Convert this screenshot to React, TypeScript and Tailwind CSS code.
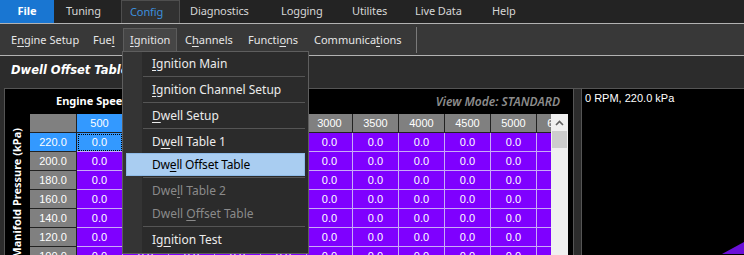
import React from 'react'

const cols = ['500', '1000', '1500', '2000', '2500', '3000', '3500', '4000', '4500', '5000', '6000']
const rows = ['220.0', '200.0', '180.0', '160.0', '140.0', '120.0', '100.0', '80.0']

// text with one access-key letter underlined
function K({ t, k }: { t: string; k: number }) {
  return (
    <span>
      {t.slice(0, k)}
      <span className="underline underline-offset-2 decoration-1">{t[k]}</span>
      {t.slice(k + 1)}
    </span>
  )
}

type Item = { t: string; k: number; disabled?: boolean; active?: boolean } | 'sep'

const menuItems: Item[] = [
  { t: 'Ignition Main', k: 0 },
  'sep',
  { t: 'Ignition Channel Setup', k: 0 },
  'sep',
  { t: 'Dwell Setup', k: 0 },
  'sep',
  { t: 'Dwell Table 1', k: 1 },
  { t: 'Dwell Offset Table', k: 2, active: true },
  'sep',
  { t: 'Dwell Table 2', k: 3, disabled: true },
  { t: 'Dwell Offset Table', k: 6, disabled: true },
  'sep',
  { t: 'Ignition Test', k: 2 },
]

function IgnitionMenu() {
  return (
    <div className="absolute left-[122px] top-[51px] w-[187px] border border-[#5e5e5e] bg-[linear-gradient(to_right,#343434_19px,#2b2b2b_19px)] pb-[2px] text-[12px] text-[#ececec]">
      {menuItems.map((it, i) => {
        if (it === 'sep') {
          return (
            <div key={i} className="h-[3px] flex items-center pl-[20px] pr-[3px]">
              <div className="h-px w-full bg-[#555]" />
            </div>
          )
        }
        if (it.active) {
          return (
            <div key={i} className="mx-[3px] h-[23px] flex items-center pl-[25px] tracking-[-0.2px] bg-[#a9cdf1] border border-[#8fbbe8] text-black">
              <K t={it.t} k={it.k} />
            </div>
          )
        }
        return (
          <div key={i} className={`h-[23px] flex items-center pl-[29px] ${it.disabled ? 'text-[#8a8a8a]' : ''}`}>
            <K t={it.t} k={it.k} />
          </div>
        )
      })}
    </div>
  )
}

function Grid() {
  return (
    <div className="w-[521px] overflow-hidden shrink-0 font-['Liberation_Sans',sans-serif] text-[11px]">
      <div className="flex">
        <div className="w-[47px] h-[19px] shrink-0 bg-[#808080] border-r border-b border-[#222]" />
        {cols.map((c, i) => (
          <div
            key={c}
            className={`w-[46px] h-[19px] shrink-0 flex items-center justify-center border-r border-b border-[#222] text-white ${i === 0 ? 'bg-[#3399ff]' : 'bg-[#808080]'}`}
          >
            {c}
          </div>
        ))}
      </div>
      {rows.map((r, ri) => (
        <div key={r} className="flex">
          <div
            className={`w-[47px] h-[19px] shrink-0 flex items-center justify-center border-r border-b border-[#222] text-white ${ri === 0 ? 'bg-[#3399ff]' : 'bg-[#808080]'}`}
          >
            {r}
          </div>
          {cols.map((c, ci) =>
            ri === 0 && ci === 0 ? (
              <div key={c} className="w-[46px] h-[19px] shrink-0 flex items-center justify-center border-r border-b border-[#c9a9f7] bg-[#3399ff] text-white outline-1 outline-dotted outline-black -outline-offset-2">
                0.0
              </div>
            ) : (
              <div key={c} className="w-[46px] h-[19px] shrink-0 flex items-center justify-center border-r border-b border-[#c9a9f7] bg-[#7f00ff] text-white">
                0.0
              </div>
            )
          )}
        </div>
      ))}
    </div>
  )
}

export default function App() {
  const top = [
    { t: 'Tuning', w: 'w-[67px] pl-[12px]' },
    { t: 'Config', w: 'w-[59px] pl-[8px]', on: true },
    { t: 'Diagnostics', w: 'w-[91px] pl-[10px]' },
    { t: 'Logging', w: 'w-[71px] pl-[10px]' },
    { t: 'Utilites', w: 'w-[63px] pl-[10px]' },
    { t: 'Live Data', w: 'w-[77px] pl-[10px]' },
    { t: 'Help', w: 'w-[60px] pl-[10px]' },
  ]

  return (
    <div className="relative w-[744px] h-[255px] overflow-hidden bg-[#2c2c2c] font-['Noto_Sans',sans-serif] text-[12px]">
      {/* main menu */}
      <div className="h-[23px] flex bg-[#232323] text-[#d6d6d6] text-[11px] tracking-[-0.1px]">
        <div className="w-[54px] flex items-center justify-center bg-[#1976d2] text-white font-bold">File</div>
        {top.map((m) =>
          m.on ? (
            <div key={m.t} className={`${m.w} flex items-center border-x border-t border-[#4e4e4e] bg-[#313131] text-[#3d8fdd]`}>
              {m.t}
            </div>
          ) : (
            <div key={m.t} className={`${m.w} flex items-center`}>{m.t}</div>
          )
        )}
      </div>
      <div className="h-px bg-[#b2b2b2]" />

      {/* toolbar */}
      <div className="h-[31px] flex items-start pt-[4px] pl-[4px] bg-[#383838] text-[#e6e6e6] text-[11px]">
        <div className="w-[82px] h-[24px] flex items-center pl-[7px]"><K t="Engine Setup" k={1} /></div>
        <div className="w-[37px] h-[24px] flex items-center pl-[7px]"><K t="Fuel" k={3} /></div>
        <div className="w-[54px] h-[24px] flex items-center pl-[6px] bg-[#464646] border border-[#5c5c5c]"><K t="Ignition" k={0} /></div>
        <div className="w-[64px] h-[24px] flex items-center pl-[8px]"><K t="Channels" k={1} /></div>
        <div className="w-[66px] h-[24px] flex items-center pl-[7px]"><K t="Functions" k={6} /></div>
        <div className="w-[105px] h-[24px] flex items-center pl-[7px]"><K t="Communications" k={9} /></div>
        <div className="ml-[4px] -mt-[1px] w-px h-[26px] bg-[#7a7a7a]" />
      </div>
      <div className="h-px bg-[#b2b2b2]" />

      {/* content */}
      <div className="h-[32px] pt-[5px] pl-[11px]">
        <div className="leading-[18px] text-white font-bold italic text-[11.5px] font-['DejaVu_Sans',sans-serif]">Dwell Offset Table</div>
      </div>

      <div className="flex h-[200px]">
        {/* table panel */}
        <div className="ml-[4px] w-[570px] shrink-0 border border-[#555] bg-black flex flex-col">
          <div className="h-[25px] flex items-center justify-between pl-[51px] pr-[13px]">
            <span className="text-white font-bold text-[11px]">Engine Speed</span>
            <span className="text-[#8c8c8c] italic font-semibold text-[12px]">View Mode: STANDARD</span>
          </div>
          <div className="flex flex-1 overflow-hidden">
            <div className="w-[25px] shrink-0 flex items-start justify-center pt-[14px]">
              <span className="[writing-mode:vertical-rl] rotate-180 text-white font-bold text-[11px] whitespace-nowrap">
                Manifold Pressure (kPa)
              </span>
            </div>
            <Grid />
            <div className="w-[17px] shrink-0 bg-[#f0f0f0] flex flex-col">
              <div className="h-[17px] flex items-center justify-center">
                <svg width="9" height="6" viewBox="0 0 9 6">
                  <path d="M1 5 L4.5 1.5 L8 5" fill="none" stroke="#606060" strokeWidth="1.6" />
                </svg>
              </div>
              <div className="mx-[1px] h-[17px] bg-[#cdcdcd]" />
            </div>
          </div>
        </div>

        {/* splitter */}
        <div className="w-[7px] shrink-0 border-t border-[#555] bg-[#2c2c2c]" />

        {/* live panel */}
        <div className="relative flex-1 border border-r-0 border-[#555] bg-black pl-[3px] pt-[3px]">
          <div className="text-white text-[11px] leading-[13px] font-['Liberation_Sans',sans-serif]">0 RPM, 220.0 kPa</div>
          <svg className="absolute right-0 bottom-[33px]" width="24" height="14" viewBox="0 0 24 14">
            <polygon points="2,14 24,2 24,14" fill="#6a10d8" />
          </svg>
        </div>
      </div>

      <IgnitionMenu />
    </div>
  )
}
